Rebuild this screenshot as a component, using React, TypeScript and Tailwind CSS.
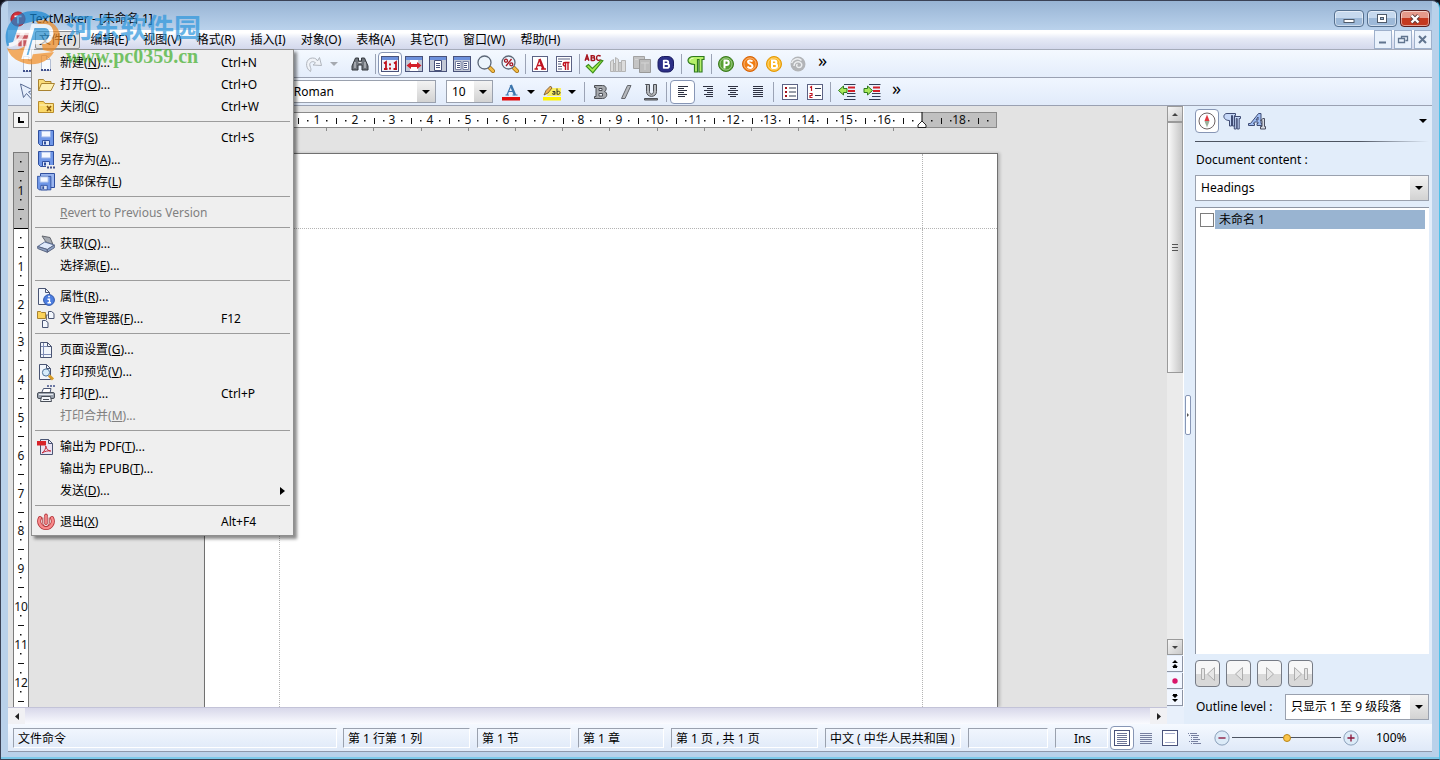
import React, { useLayoutEffect, useRef, useState } from 'react';
import clsx from 'clsx';

type IconProps = { children: React.ReactNode; size?: number };

const Svg = ({ children, size = 18 }: IconProps) => (
  <svg width={size} height={size} viewBox="0 0 18 18" fill="none" className="shrink-0" aria-hidden="true">
    {children}
  </svg>
);

const NAVY = '#4a5573';

const Caret = ({ color = '#000' }: { color?: string }) => (
  <svg width="8" height="4" viewBox="0 0 8 4" className="shrink-0" aria-hidden="true">
    <path d="M0 0h8L4 4z" fill={color} />
  </svg>
);

/* ---------- menu icons ---------- */

const NewIcon = () => (
  <Svg>
    <path d="M4.500 1.500h5l4 4v11h-9z" fill="#f7faff" stroke="#b4bfd4" />
    <path d="M9.500 1.500v4h4" stroke="#b4bfd4" />
    <path d="M4 16h2M7 16h2M10 16h2M13 16h1" stroke="#41518c" strokeWidth="2" />
  </Svg>
);

const OpenIcon = () => (
  <Svg>
    <path d="M1.500 14.500v-11h5l1.500 2h6v3" fill="#f9dc7a" stroke="#a98330" />
    <path d="M1.500 14.500l3-7h13l-3.500 7z" fill="#fdf0b4" stroke="#a98330" />
  </Svg>
);

const CloseDocIcon = () => (
  <Svg>
    <path d="M1.500 14.500v-11h5l1.500 2h8.500v9z" fill="#fbd968" stroke="#b98c2b" />
    <path d="M2.500 7h13" stroke="#fff3bf" />
    <path d="M10 8l4 5M14 8l-4 5" stroke="#8a5a10" strokeWidth="1.500" />
  </Svg>
);

const Floppy = () => (
  <>
    <path d="M1.500 1.500h15v15h-13l-2-2z" fill="#6f97e8" stroke="#2f4f9e" />
    <path d="M4.500 2h9v6h-9z" fill="#f4f8ff" stroke="#9cb5e8" />
    <path d="M5.500 11.500h7v5h-7z" fill="#dfe8fa" stroke="#2f4f9e" />
    <path d="M7 12.500h2v3H7z" fill="#2f4f9e" />
  </>
);

const SaveIcon = () => (
  <Svg>
    <Floppy />
  </Svg>
);

const SaveAsIcon = () => (
  <Svg>
    <g transform="translate(0 -1)">
      <Floppy />
    </g>
    <path d="M9 14h9v4H9z" fill="#efefef" />
    <path d="M10 16.500h2M13 16.500h2M16 16.500h2" stroke="#41518c" strokeWidth="2" />
  </Svg>
);

const SaveAllIcon = () => (
  <Svg>
    <path d="M3.500 .5h14v14h-14z" fill="#9ab6f0" stroke="#2f4f9e" />
    <g transform="translate(-1 2) scale(.9)">
      <Floppy />
    </g>
  </Svg>
);

const ScannerIcon = () => (
  <Svg>
    <path d="M5 1l8 1.500 3 7-7-2.500z" fill="#a5aab2" stroke="#63676f" />
    <path d="M.7 11.500l7-4.500 9.600 3-7 4.500z" fill="#dfe9fb" stroke="#5a6d95" />
    <path d="M.7 11.500v2l9.600 3.800v-2.800zM10.300 14.500v2.800l7-4.500v-2.800z" fill="#8fa3c6" stroke="#5a6580" />
  </Svg>
);

const PropsIcon = () => (
  <Svg>
    <path d="M1.500 .5h7l4 4v12h-11z" fill="#f2f6fc" stroke={NAVY} />
    <path d="M8.500 .5v4h4" stroke={NAVY} />
    <circle cx="12" cy="12" r="5.400" fill="#4c7ee0" stroke="#2f57ad" />
    <path d="M11.200 8.500h1.600M10.500 11.200h2v3.500M10.500 14.800h3.500" stroke="#fff" strokeWidth="1.400" />
  </Svg>
);

const FilesIcon = () => (
  <Svg>
    <path d="M.5 8.500v-7h3l1 1h4v6z" fill="#fbd35a" stroke="#a98330" />
    <path d="M11.500 1.500h3l2.500 2v5h-5.500zM5.500 10.500h3l2.500 2v5H5.500z" fill="#f2f6fc" stroke={NAVY} />
    <path d="M9 5h2M9.500 5v5" stroke="#777" />
  </Svg>
);

const PageSetupIcon = () => (
  <Svg>
    <path d="M3.500 1.500h7l4 4v11h-11z" fill="#f2f6fc" stroke={NAVY} />
    <path d="M10.500 1.500v4h4" stroke={NAVY} />
    <path d="M6.500 2v14M4 5.500h6M4 13.500h10" stroke="#7f8db5" />
  </Svg>
);

const PreviewIcon = () => (
  <Svg>
    <path d="M2.500 1.500h7l4 4v11h-11z" fill="#f2f6fc" stroke={NAVY} />
    <path d="M9.500 1.500v4h4" stroke={NAVY} />
    <circle cx="9" cy="9.500" r="3.600" fill="#d6ecfb" stroke="#4d7196" />
    <path d="M12 12.500l4 4" stroke="#d79a25" strokeWidth="3" />
  </Svg>
);

const PrinterIcon = () => (
  <Svg>
    <path d="M10 1h2M13 1h2M16 1h2" stroke="#41518c" strokeWidth="1.500" />
    <path d="M4.500 8l2-4.500h7.500L13 8z" fill="#fff" stroke={NAVY} />
    <rect x=".5" y="7.500" width="17" height="6" rx="1.500" fill="#9aa2ae" stroke="#494f59" />
    <path d="M2 9.500h14" stroke="#e8ebf0" />
    <path d="M4.500 11.500h9l1 5h-11z" fill="#f4f7fb" stroke="#494f59" />
    <path d="M6 14.500h6" stroke="#494f59" />
  </Svg>
);

const PdfIcon = () => (
  <Svg>
    <path d="M3.500 1.500h8l4 4v11h-12z" fill="#e9e3f3" stroke={NAVY} />
    <path d="M11.500 1.500v4h4" stroke={NAVY} />
    <path d="M0 3h9v4.500H0z" fill="#d8232a" />
    <path d="M5 15c2.500-1.500 4-5 3.800-7 .4 3 2.500 5 5 5-3-.5-6 .3-8.800 2z" stroke="#c4283a" />
  </Svg>
);

const ExitIcon = () => (
  <Svg>
    <path d="M3 5a6.800 6.800 0 1 0 12 0" stroke="#b3343a" strokeWidth="4" strokeLinecap="round" />
    <path d="M3 5a6.800 6.800 0 1 0 12 0" stroke="#f98a8b" strokeWidth="2.400" strokeLinecap="round" />
    <path d="M5.800 4.500v6a3.200 3.200 0 0 0 6.400 0v-6" stroke="#b3343a" />
    <path d="M9 2.300v8" stroke="#b3343a" strokeWidth="3.400" strokeLinecap="round" />
    <path d="M9 2.300v8" stroke="#f98a8b" strokeWidth="1.800" strokeLinecap="round" />
  </Svg>
);

/* ---------- toolbar icons ---------- */

const RedoIcon = () => (
  <Svg>
    <path
      d="M5.500 16.500C-.5 13 .5 3 7.500 3c3 0 4.500 1.500 5 3l2-3.500 2 8-8.500-.5 2.500-2C9 5.500 3.500 6.500 5 11c.5 2 1.500 3 .5 5.500z"
      fill="#f0f3f8"
      stroke="#b0b5bd"
    />
  </Svg>
);

const BinocularsIcon = () => (
  <Svg>
    <path d="M4.500 3h3v3h3V3h3l3.500 8v4h-6v-5h-4v5H1v-4z" fill="#70757c" stroke="#34383d" />
    <path d="M4 7v6M14 7v6" stroke="#d5d8dc" />
    <path d="M7.500 7.500h3" stroke="#ddd" />
  </Svg>
);

const WinFrame = ({ children }: { children?: React.ReactNode }) => (
  <Svg>
    <rect x=".5" y="1.500" width="17" height="15" fill="#eef3fb" stroke="#49527a" />
    <path d="M1 3.500h16" stroke="#6c90dc" strokeWidth="3" />
    {children}
  </Svg>
);

const Zoom100Icon = () => (
  <WinFrame>
    <path d="M3 8.500l2-1.500v7.500M13 8.500l2-1.500v7.500M3 14h3.500M12.500 14H16" stroke="#c1121f" strokeWidth="1.800" />
    <path d="M8 8.500h2v2H8zM8 12.500h2v2H8z" fill="#c1121f" />
  </WinFrame>
);

const FitWidthIcon = () => (
  <WinFrame>
    <path d="M1 5h16v11H1z" fill="#c3c9d6" />
    <path d="M5 5h8v11H5z" fill="#fff" />
    <path d="M1.500 10.500l4.500-3.500v2h6V7l4.500 3.500L12 14v-2H6v2z" fill="#d3202a" />
  </WinFrame>
);

const FitPageIcon = () => (
  <WinFrame>
    <path d="M1 5h16v11H1z" fill="#c3c9d6" />
    <path d="M5.500 5.500h7v10h-7z" fill="#fff" stroke="#49527a" />
    <path d="M7 8.500h4M7 10.500h4M7 12.500h4" stroke="#49527a" />
  </WinFrame>
);

const TwoPagesIcon = () => (
  <WinFrame>
    <path d="M1 5h16v11H1z" fill="#c3c9d6" />
    <path d="M2.500 6.500H8v8H2.500zM10 6.500h5.500v8H10z" fill="#fff" stroke="#7a83a5" />
    <path d="M4 8.500h3M4 10.500h3M4 12.500h3M11 8.500h3M11 10.500h3M11 12.500h3" stroke="#49527a" />
  </WinFrame>
);

const MagnifierIcon = ({ percent = false }: { percent?: boolean }) => (
  <Svg>
    <path d="M12.500 12.500l3.500 3.500" stroke="#9c6a12" strokeWidth="4" strokeLinecap="round" />
    <path d="M12.500 12.500l3.500 3.500" stroke="#f2bb45" strokeWidth="2.500" strokeLinecap="round" />
    <circle cx="7.500" cy="7.500" r="6.500" fill="#ecf5fd" stroke="#5d6878" strokeWidth="1.300" />
    {percent && (
      <>
        <path d="M10.500 4l-5.500 7" stroke="#a5121c" strokeWidth="1.300" />
        <circle cx="5" cy="5.700" r="1.500" stroke="#a5121c" strokeWidth="1.300" />
        <circle cx="10.300" cy="9.300" r="1.500" stroke="#a5121c" strokeWidth="1.300" />
      </>
    )}
  </Svg>
);

const CharFormatIcon = () => (
  <Svg>
    <rect x="1.500" y="1.500" width="15" height="15" fill="#fff" stroke="#5b6284" />
    <path d="M5 14L8.500 4.500" stroke="#c1121f" strokeWidth="1.200" />
    <path d="M8.500 4l4 10" stroke="#c1121f" strokeWidth="2.400" />
    <path d="M6.500 10.500h5M3.500 14H7M10 14h5" stroke="#c1121f" strokeWidth="1.300" />
  </Svg>
);

const ParaFormatIcon = () => (
  <Svg>
    <rect x="1.500" y="1.500" width="15" height="15" fill="#fff" stroke="#5b6284" />
    <path d="M3 4h12M3 6.500h4M3 9h3M3 11.500h4M3 14h4" stroke="#5b6284" />
    <path d="M14.500 7.500H10a1.700 1.700 0 0 0 0 3.500M10.500 7v8M13 7v8" stroke="#c1121f" strokeWidth="1.400" />
  </Svg>
);

const SpellIcon = () => (
  <Svg size={20}>
    <path
      d="M1 6l1.700-5L4.400 6M1.700 4.500h2M6.500 1v5M6.500 1.500h1.800c1.500 0 1.500 2 0 2H6.500h2c1.600 0 1.600 2.300 0 2.300h-2M15 2c-2.500-1.600-3.700 0-3.700 1.500S13 6.700 15 5"
      stroke="#a5121c"
      strokeWidth="1.300"
    />
    <path d="M2 11l2-1.500 3.500 3.500L15.500 5.500l1.500.5L8 17z" fill="#a4ec4b" stroke="#3c8f1c" />
  </Svg>
);

const BooksIcon = () => (
  <Svg>
    <path d="M1.500 6.500l3-2v12h-3zM6.500 2.500l3 2v12h-3zM12.500 5.500h4v11h-4z" fill="#dcdcdc" stroke="#b4b4b4" />
    <path d="M4.500 8.500h2v8h-2zM9.500 7.500h3v9h-3z" fill="#c9c9c9" stroke="#b4b4b4" />
  </Svg>
);

const StackIcon = () => (
  <Svg>
    <path d="M.5 1.500h11v12H.5z" fill="#c4c4c4" stroke="#a2a2a2" />
    <path d="M6.500 4.500h11v13h-11z" fill="#bdbdbd" stroke="#999" />
    <path d="M2 4.500h3M8 8h8M12 8v7" stroke="#d4d4d4" />
  </Svg>
);

const BerlitzIcon = () => (
  <Svg>
    <rect x="1" y="1.500" width="15.500" height="15.500" rx="5.500" fill="#2c2f86" stroke="#1b1d60" />
    <path d="M6.800 5v8.500M6.500 5.700h3c2.400 0 2.400 3.300 0 3.300h-2.500 3c2.800 0 2.800 3.800 0 3.800H6.500" stroke="#fff" strokeWidth="1.800" />
  </Svg>
);

const PilcrowIcon = () => (
  <Svg>
    <path
      d="M17 1.500v3h-2V17h-3V4.500h-1.500V17h-3v-7.500C3 9.500 1 7.500 1 5.500s2-4 5.500-4z"
      fill="#b6f06a"
      stroke="#2f7a1f"
      strokeWidth="1.200"
    />
    <path d="M3 5.500c0-1.500 1.500-2.200 3.500-2.200" stroke="#eaffce" />
  </Svg>
);

const Ball = ({ fill, edge, d }: { fill: string; edge: string; d: string }) => (
  <Svg>
    <circle cx="9" cy="9" r="7.500" fill={fill} stroke={edge} />
    <circle cx="9" cy="9" r="6" stroke="#fff" strokeOpacity=".4" />
    <path d={d} stroke="#fff" strokeWidth="2" />
  </Svg>
);

const GlobeIcon = () => (
  <Svg>
    <circle cx="9" cy="9" r="7.500" fill="#b2b4b7" />
    <path d="M2.500 8c1.500-4 7-6 10-2.500M5 11c0-3.500 3.500-5.500 6.500-3.500 2.500 2 1 5-1.500 5s-3-2.500-1.500-3.500" stroke="#eceef0" strokeWidth="1.500" />
  </Svg>
);

const FontColorIcon = () => (
  <Svg>
    <path d="M0 14h18v3.500H0z" fill="#e30b0b" />
    <path d="M5 12L9 2.500" stroke="#3d76ad" strokeWidth="1.200" />
    <path d="M8.800 2L13 12" stroke="#3d76ad" strokeWidth="2.400" />
    <path d="M6.500 8.500h5M3.500 12H7M10.500 12h5" stroke="#3d76ad" strokeWidth="1.200" />
  </Svg>
);

const HighlightIcon = () => (
  <Svg>
    <path d="M0 14h18v3.500H0z" fill="#fff200" />
    <path d="M6 5h12v8H4z" fill="#fbee62" />
    <path d="M1 12l2-4.500L7.500 3 9 5 5 10z" fill="#f0b354" stroke="#6b5328" strokeWidth=".8" />
    <path d="M12 11.500V8.500H9.500M12 10c-3-.5-3 1.500-1.500 1.500L12 11M14 5.500v6M14 9c2-1.500 3-.5 3 .8s-1.500 2-3 1.200" stroke="#3c3c2c" />
  </Svg>
);

const BoldIcon = () => (
  <Svg>
    <path d="M2.500 2.500h8c4.500 0 4.500 5 2 6 3.500 1 3 7-2 7h-8v-2h1.500v-9H2.500z" fill="#a6a9ad" stroke="#4b4e54" />
    <path d="M7 5.500h3v2H7zM7 10.500h3.500v2.500H7z" fill="#f4f8ff" stroke="#4b4e54" />
  </Svg>
);

const ItalicIcon = () => (
  <Svg>
    <path d="M10.500 2.500h3.500L8 15.500H4.500z" fill="#b6b9bd" stroke="#63666c" />
  </Svg>
);

const UnderlineIcon = () => (
  <Svg>
    <path d="M3.500 1.500h4v7c0 3.500 4 3.500 4 0v-7h3v7c0 6.500-10 6.500-10 0v-6z" fill="#b6b9bd" stroke="#4b4e54" />
    <path d="M2.500 15.500h13V17h-13z" fill="#8f9298" stroke="#4b4e54" />
  </Svg>
);

const AlignIcon = ({ d }: { d: string }) => (
  <Svg>
    <path d={d} stroke="#2e3242" />
  </Svg>
);

const ALIGN_LEFT = 'M4 3.500h10M4 5.500h6M4 7.500h9M4 9.500h6M4 11.500h9M4 13.500h7';
const ALIGN_RIGHT = 'M4 3.500h10M8 5.500h6M5 7.500h9M8 9.500h6M5 11.500h9M7 13.500h7';
const ALIGN_CENTER = 'M4 3.500h10M6 5.500h6M4 7.500h10M6 9.500h6M4 11.500h10M6 13.500h6';
const ALIGN_FULL = 'M4 3.500h10M4 5.500h10M4 7.500h10M4 9.500h10M4 11.500h10M4 13.500h10';

const BulletsIcon = () => (
  <Svg>
    <rect x="1.500" y="1.500" width="15" height="15" fill="#fff" stroke="#5b6284" />
    <path d="M4 4h2v2H4zM4 8h2v2H4zM4 12h2v2H4z" fill="#a5121c" />
    <path d="M8 5h7M8 9h7M8 13h7" stroke="#333c55" />
  </Svg>
);

const NumberingIcon = () => (
  <Svg>
    <rect x="1.500" y="1.500" width="15" height="15" fill="#fff" stroke="#5b6284" />
    <path d="M4 4.500l1.500-1V8M3.500 10.500h2.500v2H4v2h2.500" stroke="#c1121f" strokeWidth="1.200" />
    <path d="M9 5.500h6M9 12.500h6" stroke="#333c55" />
  </Svg>
);

const IndentIcon = ({ out = false }: { out?: boolean }) => (
  <Svg>
    <path d="M6 1.500h11.500M6 16.500h11.500M9 13.500h8.500M9 10.500h8.500" stroke="#333c55" />
    <path d="M10 4.500h7M10 8h7" stroke="#d3202a" strokeWidth="2.200" />
    <path
      d={out ? 'M.5 7.500L5.500 3v2.500H9v4H5.500V12z' : 'M9.500 7.500L4.500 3v2.500H1v4h3.500V12z'}
      fill="#a8e85a"
      stroke="#2f7a1f"
    />
  </Svg>
);

const CursorIcon = () => (
  <Svg>
    <path d="M1.500 1l3 13.500 3-4 4.500 5 2-2-4.500-4.500 4.500-2z" fill="#e6effc" stroke="#5a6d95" />
  </Svg>
);

/* ---------- small building blocks ---------- */

interface ToolButtonProps {
  label: string;
  active?: boolean;
  wide?: boolean;
  disabled?: boolean;
  children: React.ReactNode;
}

const ToolButton: React.FC<ToolButtonProps> = ({ label, active, wide, disabled, children }) => (
  <button
    aria-label={label}
    disabled={disabled}
    className={clsx(
      'flex h-6 shrink-0 items-center justify-center rounded-sm border',
      wide ? 'w-[25px]' : 'w-6',
      active ? 'border-[#8796b5] bg-white' : 'border-transparent',
    )}
  >
    {children}
  </button>
);

const CaretButton = ({ label, color }: { label: string; color?: string }) => (
  <button aria-label={label} className="flex h-6 w-4 shrink-0 items-center justify-center">
    <Caret color={color} />
  </button>
);

const Divider = ({ className = 'w-1.5' }: { className?: string }) => (
  <span className={clsx('flex h-5 shrink-0 justify-center', className)}>
    <span className="w-px bg-[#9ba3b5]" />
  </span>
);

interface DropDownProps {
  label?: string;
  id?: string;
  value: string;
  className: string;
}

const DropDown: React.FC<DropDownProps> = ({ label, id, value, className }) => (
  <div className={clsx('relative shrink-0 border border-[#9aa1ae] bg-white', className)}>
    <select id={id} aria-label={label} className="h-full w-full appearance-none bg-transparent pl-[5px] pr-4 outline-none">
      <option>{value}</option>
    </select>
    <span className="pointer-events-none absolute inset-y-0 right-0 flex w-[18px] items-center justify-center bg-linear-to-b from-[#f3f3f3] to-[#d2d2d2]">
      <Caret />
    </span>
  </div>
);

/* ---------- menu ---------- */

interface MenuEntry {
  label: string;
  mnemonic: string;
  tail?: string;
  shortcut?: string;
  icon?: React.ReactNode;
  disabled?: boolean;
  submenu?: boolean;
}

const fileMenu: MenuEntry[][] = [
  [
    { label: '新建', mnemonic: 'N', tail: '...', shortcut: 'Ctrl+N', icon: <NewIcon /> },
    { label: '打开', mnemonic: 'O', tail: '...', shortcut: 'Ctrl+O', icon: <OpenIcon /> },
    { label: '关闭', mnemonic: 'C', shortcut: 'Ctrl+W', icon: <CloseDocIcon /> },
  ],
  [
    { label: '保存', mnemonic: 'S', shortcut: 'Ctrl+S', icon: <SaveIcon /> },
    { label: '另存为', mnemonic: 'A', tail: '...', icon: <SaveAsIcon /> },
    { label: '全部保存', mnemonic: 'L', icon: <SaveAllIcon /> },
  ],
  [{ label: 'Revert to Previous Version', mnemonic: '', disabled: true }],
  [
    { label: '获取', mnemonic: 'Q', tail: '...', icon: <ScannerIcon /> },
    { label: '选择源', mnemonic: 'E', tail: '...' },
  ],
  [
    { label: '属性', mnemonic: 'R', tail: '...', icon: <PropsIcon /> },
    { label: '文件管理器', mnemonic: 'F', tail: '...', shortcut: 'F12', icon: <FilesIcon /> },
  ],
  [
    { label: '页面设置', mnemonic: 'G', tail: '...', icon: <PageSetupIcon /> },
    { label: '打印预览', mnemonic: 'V', tail: '...', icon: <PreviewIcon /> },
    { label: '打印', mnemonic: 'P', tail: '...', shortcut: 'Ctrl+P', icon: <PrinterIcon /> },
    { label: '打印合并', mnemonic: 'M', tail: '...', disabled: true },
  ],
  [
    { label: '输出为 PDF', mnemonic: 'T', tail: '...', icon: <PdfIcon /> },
    { label: '输出为 EPUB', mnemonic: 'T', tail: '...' },
    { label: '发送', mnemonic: 'D', tail: '...', submenu: true },
  ],
  [{ label: '退出', mnemonic: 'X', shortcut: 'Alt+F4', icon: <ExitIcon /> }],
];

const Mnemonic = ({ entry }: { entry: MenuEntry }) => {
  if (!entry.mnemonic) {
    return (
      <span>
        <u>{entry.label[0]}</u>
        {entry.label.slice(1)}
      </span>
    );
  }
  return (
    <span>
      {entry.label}(<u>{entry.mnemonic}</u>){entry.tail}
    </span>
  );
};

const FileMenu = () => (
  <div
    role="menu"
    className="absolute top-full -left-1 z-20 w-[263px] border border-[#8f8f8f] bg-[#efefef] py-0.5 shadow-[3px_3px_3px_rgba(0,0,0,0.45)]"
  >
    {fileMenu.map((group, i) => (
      <React.Fragment key={i}>
        {i > 0 && <div className="mx-[3px] mt-[3px] mb-[5px] h-px bg-[#9c9c9c]" />}
        {group.map((entry) => (
          <button
            key={entry.label}
            role="menuitem"
            disabled={entry.disabled}
            className={clsx('flex h-[22px] w-full items-center pl-[5px] text-left', entry.disabled && 'text-[#808080]')}
          >
            <span className="w-[23px] shrink-0">{entry.icon}</span>
            <span className="w-[161px] shrink-0 whitespace-nowrap">
              <Mnemonic entry={entry} />
            </span>
            <span className="flex-1">{entry.shortcut}</span>
            {entry.submenu && (
              <svg width="5" height="8" viewBox="0 0 5 8" className="mr-2" aria-hidden="true">
                <path d="M0 0v8l5-4z" fill="#000" />
              </svg>
            )}
          </button>
        ))}
      </React.Fragment>
    ))}
  </div>
);

const menus = ['编辑(E)', '视图(V)', '格式(R)', '插入(I)', '对象(O)', '表格(A)', '其它(T)', '窗口(W)', '帮助(H)'];

const TitleBar = () => (
  <header className="flex h-[29px] shrink-0 items-end justify-between bg-linear-to-b from-[#98b4d4] to-[#bad2ec] pr-[2px] pb-[3px] pl-[2px]">
    <div className="flex h-4 items-center gap-1">
      <Svg size={16}>
        <circle cx="9" cy="9" r="8" fill="#d3303a" stroke="#a31c28" />
        <path d="M5 6h8M9 6v8" stroke="#fff" strokeWidth="2" />
      </Svg>
      <h1>TextMaker - [未命名 1]</h1>
    </div>
    <div className="flex gap-[3px]">
      {['Minimize', 'Maximize', 'Close'].map((name) => (
        <button
          key={name}
          aria-label={name}
          className={clsx(
            'flex h-[17px] w-[30px] items-center justify-center rounded-sm border shadow-[inset_0_0_0_1px_rgba(255,255,255,0.5)]',
            name === 'Close'
              ? 'border-[#5a1d1d] bg-linear-to-b from-[#e59a8b] from-45% to-[#c4391f] to-50%'
              : 'border-[#55708f] bg-linear-to-b from-[#c6d9ee] from-45% to-[#9db9d8] to-50%',
          )}
        >
          <svg width="12" height="10" viewBox="0 0 12 10" fill="none" aria-hidden="true">
            {name === 'Minimize' && <rect x="1" y="5.500" width="10" height="3" fill="#fff" stroke="#4e5a69" />}
            {name === 'Maximize' && (
              <>
                <rect x="1.500" y=".5" width="9" height="8" fill="#fff" stroke="#4e5a69" />
                <rect x="4.500" y="3.500" width="3" height="2" fill="#9db9d8" stroke="#4e5a69" />
              </>
            )}
            {name === 'Close' && (
              <>
                <path d="M2.500 1.500l7 7M9.500 1.500l-7 7" stroke="#5b3a3a" strokeWidth="4" />
                <path d="M2.500 1.500l7 7M9.500 1.500l-7 7" stroke="#fff" strokeWidth="2.400" />
              </>
            )}
          </svg>
        </button>
      ))}
    </div>
  </header>
);

const MenuBar = () => (
  <nav className="flex h-5 shrink-0 items-stretch border-b border-[#a5abba] bg-linear-to-b from-white from-15% via-[#e6eaf6] via-45% to-[#d3d8ec] pl-[7px]">
    <div className="flex w-5 items-center">
      <Svg size={15}>
        <rect x="1" y="1" width="16" height="16" fill="#f3dede" />
        <path d="M2 4h14v4H2zM4 10h4v7H4zM10 10h4v7h-4z" fill="#c65960" />
      </Svg>
    </div>
    <div className="relative">
      <button className="mt-px h-[18px] rounded-xs border border-[#8d8d8d] bg-[#e2e2e2] px-[3px]">文件(F)</button>
      <FileMenu />
    </div>
    <ul className="flex flex-1 items-center gap-px pt-px pl-[3px]">
      {menus.map((m) => (
        <li key={m}>
          <button className="px-[7px] whitespace-nowrap">{m}</button>
        </li>
      ))}
    </ul>
    <div className="flex gap-0.5">
      {['M3 9.500h7', 'M5.500 5.500v-2h6v4h-2M2.500 5.500h6v4h-6z', 'M3 3l7 7M10 3l-7 7'].map((d, i) => (
        <button
          key={d}
          aria-label={['Minimize document', 'Restore document', 'Close document'][i]}
          className="flex w-[18px] items-center justify-center border border-[#9eb0cb] bg-[#eaf2fc]"
        >
          <svg width="14" height="14" viewBox="0 0 14 14" fill="none" aria-hidden="true">
            <path d={d} stroke="#61758f" strokeWidth={i === 1 ? 1.3 : 2} />
          </svg>
        </button>
      ))}
    </div>
  </nav>
);

const MainToolbar = () => (
  <div className="flex h-7 shrink-0 items-center border-b border-[#9aa1b2] bg-linear-to-b from-[#f4f9ff] to-[#e4edfb] pl-2">
    <div className="w-[286px] shrink-0">
      <ToolButton label="New">
        <NewIcon />
      </ToolButton>
    </div>
    <ToolButton label="Redo" disabled>
      <RedoIcon />
    </ToolButton>
    <CaretButton label="Redo list" color="#a5a9b0" />
    <span className="w-1.5 shrink-0" />
    <ToolButton label="Find">
      <BinocularsIcon />
    </ToolButton>
    <Divider />
    <ToolButton label="Actual size" active>
      <Zoom100Icon />
    </ToolButton>
    <ToolButton label="Fit margins">
      <FitWidthIcon />
    </ToolButton>
    <ToolButton label="Full page">
      <FitPageIcon />
    </ToolButton>
    <ToolButton label="Two pages">
      <TwoPagesIcon />
    </ToolButton>
    <ToolButton label="Zoom in">
      <MagnifierIcon />
    </ToolButton>
    <ToolButton label="Zoom level">
      <MagnifierIcon percent />
    </ToolButton>
    <Divider />
    <ToolButton label="Character">
      <CharFormatIcon />
    </ToolButton>
    <ToolButton label="Paragraph">
      <ParaFormatIcon />
    </ToolButton>
    <Divider />
    <ToolButton label="Spelling">
      <SpellIcon />
    </ToolButton>
    <ToolButton label="Thesaurus" disabled>
      <BooksIcon />
    </ToolButton>
    <ToolButton label="Translate" disabled>
      <StackIcon />
    </ToolButton>
    <ToolButton label="Dictionary">
      <BerlitzIcon />
    </ToolButton>
    <Divider />
    <ToolButton label="Formatting marks">
      <PilcrowIcon />
    </ToolButton>
    <Divider />
    <ToolButton label="PlanMaker">
      <Ball fill="#58a032" edge="#3c7a1e" d="M7.500 13.500V5.500h2c3 0 3 4.500 0 4.500h-2" />
    </ToolButton>
    <ToolButton label="Presentations">
      <Ball fill="#f07d14" edge="#d5640a" d="M11.500 6.500c-1-1.500-4.500-1.500-4.500 .5s4.500 1.500 4.500 4-4 2.500-5 .5" />
    </ToolButton>
    <ToolButton label="BasicMaker">
      <Ball fill="#fbb41c" edge="#e39a0a" d="M7 13V5.500h2.500c2.500 0 2.500 3.500 0 3.500H7h3c2.700 0 2.700 4 0 4H6.500" />
    </ToolButton>
    <ToolButton label="Thunderbird" disabled>
      <GlobeIcon />
    </ToolButton>
    <button aria-label="More tools" className="ml-2 pb-2 text-lg leading-4">
      »
    </button>
  </div>
);

const FormatToolbar = () => (
  <div className="flex h-7 shrink-0 items-center border-b border-[#9aa1b2] bg-linear-to-b from-[#f0f6ff] to-[#e1ebfa] pl-2">
    <div className="w-[207px] shrink-0">
      <ToolButton label="Object mode">
        <CursorIcon />
      </ToolButton>
    </div>
    <DropDown label="Font" value="Times New Roman" className="h-[23px] w-[213px]" />
    <span className="w-2.5 shrink-0" />
    <DropDown label="Font size" value="10" className="h-[23px] w-[47px]" />
    <span className="w-[5px] shrink-0" />
    <ToolButton label="Font color" wide>
      <FontColorIcon />
    </ToolButton>
    <CaretButton label="Font color list" />
    <ToolButton label="Highlight" wide>
      <HighlightIcon />
    </ToolButton>
    <CaretButton label="Highlight list" />
    <Divider className="w-2" />
    <ToolButton label="Bold" wide>
      <BoldIcon />
    </ToolButton>
    <ToolButton label="Italic" wide>
      <ItalicIcon />
    </ToolButton>
    <ToolButton label="Underline" wide>
      <UnderlineIcon />
    </ToolButton>
    <Divider className="w-[7px]" />
    <ToolButton label="Align left" wide active>
      <AlignIcon d={ALIGN_LEFT} />
    </ToolButton>
    <ToolButton label="Align right" wide>
      <AlignIcon d={ALIGN_RIGHT} />
    </ToolButton>
    <ToolButton label="Center" wide>
      <AlignIcon d={ALIGN_CENTER} />
    </ToolButton>
    <ToolButton label="Justify" wide>
      <AlignIcon d={ALIGN_FULL} />
    </ToolButton>
    <Divider className="w-[7px]" />
    <ToolButton label="Bullets" wide>
      <BulletsIcon />
    </ToolButton>
    <ToolButton label="Numbering" wide>
      <NumberingIcon />
    </ToolButton>
    <Divider className="w-[7px]" />
    <ToolButton label="Decrease indent" wide>
      <IndentIcon out />
    </ToolButton>
    <ToolButton label="Increase indent" wide>
      <IndentIcon />
    </ToolButton>
    <button aria-label="More formatting" className="ml-2 pb-2 text-lg leading-4">
      »
    </button>
  </div>
);

/* ---------- rulers ---------- */

const CM = 37.8;
const MARGIN = 75;
const PAGE = 793;

const HorizontalRuler = () => {
  const marks = Array.from({ length: 21 }, (_, i) => i - 2);
  const end = PAGE - MARGIN;
  return (
    <svg width={PAGE} height="21" viewBox={`0 0 ${PAGE} 21`} className="block shrink-0" fontSize="12" aria-hidden="true">
      <rect x=".5" y=".5" width={PAGE - 1} height="15" fill="#fff" stroke="#8a8a8a" />
      <rect x="1" y="1" width={MARGIN - 1} height="14" fill="#c0c0c0" />
      <rect x={end} y="1" width={MARGIN - 1} height="14" fill="#c0c0c0" />
      {marks.map((n) => {
        const x = Math.round(MARGIN + n * CM);
        return (
          <g key={n} fill="#111">
            {n !== 0 && n !== 17 && n < 19 && n > -2 && (
              <text x={x} y="12" textAnchor="middle">
                {Math.abs(n)}
              </text>
            )}
            <rect x={x + 9} y="8" width="1.500" height="1.500" />
            <rect x={x + 19} y="6" width="1" height="6" />
            <rect x={x + 28} y="8" width="1.500" height="1.500" />
          </g>
        );
      })}
      {Array.from({ length: 13 }, (_, i) => (
        <rect key={i} x={Math.round(MARGIN + (i + 1) * 47.2)} y="16" width="1" height="3" fill="#8a8a8a" />
      ))}
      <path d={`M${end} 0v10`} stroke="#000" />
      <path d={`M${end - 4} 15.500v-2.500l4-4 4 4v2.500z`} fill="#fff" stroke="#222" />
    </svg>
  );
};

const VerticalRuler = () => {
  const box = useRef<HTMLDivElement>(null);
  const [height, setHeight] = useState(0);

  useLayoutEffect(() => {
    const measure = () => setHeight(box.current?.clientHeight ?? 0);
    measure();
    window.addEventListener('resize', measure);
    return () => window.removeEventListener('resize', measure);
  }, []);

  // only the centimetres whose label fits the visible part
  const count = Math.max(0, Math.floor((height - 84) / CM) + 3);
  const marks = Array.from({ length: count }, (_, i) => i - 2);

  return (
    <div ref={box} className="w-4 shrink-0 overflow-hidden border-x border-t border-[#7b7b7b] bg-white">
      <svg width="14" height={height} className="block" fontSize="12" aria-hidden="true">
        <rect width="14" height="75" fill="#c0c0c0" />
        <path d="M0 75.500h14" stroke="#000" />
        {marks.map((n) => {
          const y = Math.round(75 + n * CM);
          return (
            <g key={n} fill="#111">
              {n !== 0 && n > -2 && (
                <text x="7" y={y + 5} textAnchor="middle">
                  {Math.abs(n)}
                </text>
              )}
              <rect x="6" y={y + 9} width="1.500" height="1.500" />
              <rect x="4" y={y + 19} width="6" height="1" />
              <rect x="6" y={y + 28} width="1.500" height="1.500" />
            </g>
          );
        })}
      </svg>
    </div>
  );
};

/* ---------- workspace ---------- */

const Page = () => (
  <div className="flex w-[794px] shrink-0 flex-col border border-b-0 border-[#707070] bg-white shadow-[2px_0_3px_rgba(0,0,0,0.2)]">
    <div className="flex h-[75px] shrink-0 border-b border-dotted border-[#b4b4b4]">
      <div className="mr-[74px] ml-[74px] flex-1 border-r border-dotted border-[#b4b4b4]" />
    </div>
    <div className="mx-[74px] flex-1 border-x border-dotted border-[#b4b4b4]" />
  </div>
);

const ScrollArrow = ({ up = false }: { up?: boolean }) => (
  <button
    aria-label={up ? 'Scroll up' : 'Scroll down'}
    className="flex h-4 w-4 shrink-0 items-center justify-center border border-[#9a9a9a] bg-linear-to-br from-[#f6f6f6] to-[#c9c9c9]"
  >
    <svg width="6" height="3" viewBox="0 0 6 3" aria-hidden="true">
      <path d={up ? 'M0 3h6L3 0z' : 'M0 0h6L3 3z'} fill="#444" />
    </svg>
  </button>
);

const VerticalScroll = () => (
  <div className="flex w-[17px] shrink-0 flex-col border-r border-white bg-[#e8e8e8]">
    <ScrollArrow up />
    <div className="min-h-0 flex-1 bg-[#ebebeb]">
      <div className="flex h-[251px] w-4 flex-col items-center justify-center gap-0.5 border border-[#9a9a9a] bg-linear-to-r from-[#fafafa] to-[#c6c6c6]">
        <span className="h-px w-1.5 bg-[#555]" />
        <span className="h-px w-1.5 bg-[#555]" />
        <span className="h-px w-1.5 bg-[#555]" />
      </div>
    </div>
    <ScrollArrow />
    <div className="flex flex-col gap-px bg-[#e3edfb] py-px">
      {['M1 4h6L4 1zM1 8h6L4 5zM2 8h4v1H2z', '', 'M2 1h4v1H2zM1 2h6L4 5zM1 6h6L4 9z'].map((d, i) => (
        <button
          key={i}
          aria-label={['Previous', 'Browse by', 'Next'][i]}
          className="flex h-4 w-4 items-center justify-center border-r border-b border-[#8c93a3] bg-[#f2f7ff]"
        >
          <svg width="8" height="10" viewBox="0 0 8 10" aria-hidden="true">
            {d ? <path d={d} fill="#000" /> : <circle cx="4" cy="5" r="2.700" fill="#d9156a" />}
          </svg>
        </button>
      ))}
    </div>
  </div>
);

const Workspace = () => (
  <main className="flex min-w-0 flex-1 flex-col bg-[#e8f0fb]">
    <div className="flex min-h-0 flex-1">
      <div className="flex min-w-0 flex-1 flex-col overflow-hidden bg-[#e3e3e3] pl-[5px]">
        <div className="flex h-[46px] shrink-0 pt-1.5">
          <button
            aria-label="Tab type"
            className="flex h-4 w-4 shrink-0 items-center justify-center border border-[#7b7b7b] bg-[#f4f4f4]"
          >
            <svg width="8" height="8" viewBox="0 0 8 8" fill="none" aria-hidden="true">
              <path d="M2 1v5h5" stroke="#000" strokeWidth="2" />
            </svg>
          </button>
          <div className="flex flex-1 justify-center pl-[5px]">
            <HorizontalRuler />
          </div>
        </div>
        <div className="flex min-h-0 flex-1">
          <VerticalRuler />
          <div className="flex flex-1 justify-center pt-px pl-1.5">
            <Page />
          </div>
        </div>
      </div>
      <VerticalScroll />
    </div>
    <div className="mr-[17px] flex h-[17px] shrink-0 justify-between border-t border-[#c3c3d8] bg-linear-to-b from-[#d8d8ea] to-[#fafbff]">
      {['M5 0v7L1 3.500z', 'M1 0v7l4-3.500z'].map((d, i) => (
        <button
          key={d}
          aria-label={i ? 'Scroll right' : 'Scroll left'}
          className="flex w-[17px] items-center justify-center bg-[#f1f1f4]"
        >
          <svg width="6" height="7" viewBox="0 0 6 7" aria-hidden="true">
            <path d={d} fill="#222" />
          </svg>
        </button>
      ))}
    </div>
  </main>
);

/* ---------- sidebar ---------- */

const navShapes = [
  { label: 'First', d: 'M2.500 3.500h3v11h-3zM15.500 2.500v13L8.500 9z' },
  { label: 'Previous heading', d: 'M12.500 2.500v13L5.500 9z' },
  { label: 'Next heading', d: 'M5.500 2.500v13l7-6.500z' },
  { label: 'Last', d: 'M12.500 3.500h3v11h-3zM2.500 2.500v13l7-6.500z' },
];

const Sidebar = () => (
  <aside className="flex w-[248px] shrink-0 bg-[#e2edfa]">
    <div className="flex w-[11px] shrink-0 items-center pl-px">
      <button
        aria-label="Collapse sidebar"
        className="flex h-10 w-1.5 items-center justify-center rounded-xs border border-[#8796b5] bg-white"
      >
        <svg width="2" height="4" viewBox="0 0 2 4" aria-hidden="true">
          <path d="M0 0v4l2-2z" fill="#555" />
        </svg>
      </button>
    </div>
    <div className="flex min-w-0 flex-1 flex-col pr-[3px] pt-[3px]">
      <div className="flex items-center">
        <ToolButton label="Navigation" active>
          <Svg>
            <circle cx="9" cy="9" r="8" stroke="#6e6262" />
            <path d="M9 2.500L11.500 9h-5z" fill="#e23a40" />
            <path d="M9 15.500L6.500 9h5z" fill="#9bb09b" />
          </Svg>
        </ToolButton>
        <ToolButton label="Paragraph styles" wide>
          <Svg>
            <path
              d="M12.500 1.500v2h-1V14h-2V3.500h-1V14h-2V8.500C-.5 8.500-.5 1.500 4 1.500zM17.500 4.500v2h-1.300V17h-2V6.500h-.9V17h-2V4.500z"
              fill="#c6d8f8"
              stroke="#3f4c74"
            />
          </Svg>
        </ToolButton>
        <ToolButton label="Character styles" wide>
          <Svg>
            <path
              d="M.5 13.500v-2h2L10.500 1.500H13v10h1v2H9v-2h1V10H6.500l-1 1.500h1v2zM8 8h2V5z"
              fill="#9fbdf2"
              stroke="#3f4c74"
              fillRule="evenodd"
            />
            <path d="M12.500 8.500l2.500-2h1.500v8h1v2.500h-5v-2.500h1.500v-6z" fill="#d5d8df" stroke="#4a4f60" />
          </Svg>
        </ToolButton>
        <button aria-label="Sidebar options" className="ml-auto p-0.5">
          <Caret />
        </button>
      </div>
      <div className="mt-2 h-px shrink-0 bg-linear-to-r from-[#4d5461] from-70% to-transparent" />
      <label htmlFor="content" className="mt-2.5 mb-[7px] pl-px leading-4">
        Document content :
      </label>
      <DropDown id="content" value="Headings" className="h-[26px]" />
      <div className="mt-1.5 min-h-0 flex-1 border-t border-l border-[#8d95a3] bg-white p-1 pt-0.5">
        <div className="flex items-center">
          <input
            id="heading-1"
            type="checkbox"
            className="mr-px h-3.5 w-3.5 shrink-0 appearance-none border border-[#7d7d7d] bg-white"
          />
          <label htmlFor="heading-1" className="flex-1 bg-[#99b4d1] pl-1 leading-[19px]">
            未命名 1
          </label>
        </div>
      </div>
      <div className="mt-1.5 flex gap-1.5">
        {navShapes.map(({ label, d }) => (
          <button
            key={label}
            aria-label={label}
            disabled
            className="flex h-[27px] w-[25px] items-center justify-center rounded-sm border border-[#767b85] bg-linear-to-b from-[#f7f7f7] from-50% to-[#d9d9d9] to-50%"
          >
            <Svg>
              <path d={d} fill="#e6e6e6" stroke="#adadad" />
            </Svg>
          </button>
        ))}
      </div>
      <div className="mt-[7px] mb-1 flex items-center justify-between pl-px">
        <label htmlFor="outline" className="whitespace-nowrap">
          Outline level :
        </label>
        <DropDown id="outline" value="只显示 1 至 9 级段落" className="h-[26px] w-36" />
      </div>
    </div>
  </aside>
);

/* ---------- status bar ---------- */

const statusFields = [
  { text: '第 1 行第 1 列', width: 'w-[127px]' },
  { text: '第 1 节', width: 'w-[94px]' },
  { text: '第 1 章', width: 'w-[86px]' },
  { text: '第 1 页 , 共 1 页', width: 'w-[147px]' },
  { text: '中文 ( 中华人民共和国 )', width: 'w-[136px]' },
  { text: '', width: 'w-[80px]' },
];

const field =
  'h-5 shrink-0 border-t border-l border-t-[#9aa1ae] border-l-[#9aa1ae] border-r border-b border-r-white border-b-white pl-1 leading-5 whitespace-nowrap';

const StatusBar = () => (
  <footer className="flex h-7 shrink-0 items-center border-b border-[#8f98ab] bg-linear-to-b from-[#f5f9ff] to-[#dfe9f8] pl-[5px]">
    <div className={clsx(field, 'mr-1.5 min-w-0 flex-1')}>文件命令</div>
    <div className="flex gap-[7px]">
      {statusFields.map((f, i) => (
        <div key={i} className={clsx(field, f.width)}>
          {f.text}
        </div>
      ))}
      <div className={clsx(field, 'w-[53px] pr-0.5 text-center')}>Ins</div>
    </div>
    <div className="flex pl-0.5">
      <ToolButton label="Normal view" active>
        <Svg>
          <rect x="1.500" y="1.500" width="15" height="15" fill="#fff" stroke="#49527a" />
          <path d="M4 4.500h10M4 6.500h10M4 8.500h10M4 10.500h10M4 12.500h10M4 14.500h10" stroke="#6d7597" />
        </Svg>
      </ToolButton>
      <ToolButton label="Continuous view">
        <Svg>
          <path d="M3 4.500h12M3 6.500h12M3 8.500h12M3 10.500h12M3 12.500h12M3 14.500h12" stroke="#7780a0" />
        </Svg>
      </ToolButton>
      <ToolButton label="Master page">
        <Svg>
          <rect x="1.500" y="1.500" width="15" height="15" fill="#fff" stroke="#49527a" />
          <path d="M4 4.500h10M4 13.500h10" stroke="#a5accb" />
        </Svg>
      </ToolButton>
      <ToolButton label="Outline view">
        <Svg>
          <path
            d="M3 4.500h1M5 4.500h7M4 6.500h1M6 6.500h8M6 8.500h1M8 8.500h5M6 10.500h1M8 10.500h7M4 12.500h1M6 12.500h7M6 14.500h1M8 14.500h8"
            stroke="#7780a0"
          />
        </Svg>
      </ToolButton>
    </div>
    <div className="flex items-center pl-2">
      <button aria-label="Zoom out">
        <Svg size={16}>
          <circle cx="9" cy="9" r="8" fill="#dcebf8" stroke="#7f96b2" />
          <path d="M5 9h8" stroke="#8a1538" strokeWidth="1.500" />
        </Svg>
      </button>
      <input
        type="range"
        aria-label="Zoom"
        defaultValue={50}
        className="mx-0.5 h-2 w-[109px] appearance-none bg-[linear-gradient(#4d5461,#4d5461)] bg-[length:100%_1px] bg-center bg-no-repeat [&::-webkit-slider-thumb]:h-2 [&::-webkit-slider-thumb]:w-2 [&::-webkit-slider-thumb]:appearance-none [&::-webkit-slider-thumb]:rounded-full [&::-webkit-slider-thumb]:border [&::-webkit-slider-thumb]:border-[#b98519] [&::-webkit-slider-thumb]:bg-[#fbc54a]"
      />
      <button aria-label="Zoom in more">
        <Svg size={16}>
          <circle cx="9" cy="9" r="8" fill="#dcebf8" stroke="#7f96b2" />
          <path d="M5 9h8M9 5v8" stroke="#8a1538" strokeWidth="1.500" />
        </Svg>
      </button>
    </div>
    <span className="w-[73px] pl-[17px]">100%</span>
  </footer>
);

const Watermark = () => (
  <div className="pointer-events-none absolute top-2.5 left-1 z-30 flex opacity-70">
    <svg width="58" height="56" viewBox="0 0 58 56" fill="none" className="shrink-0" aria-hidden="true">
      <path d="M3 36C-3 17 12 0 30 1c7 0 13 2 17 6L15 15 8 35z" fill="#1687d2" />
      <path d="M33 11c10-3 20 2 23 13 1 8-3 14-8 18l-9-2z" fill="#f28c22" />
      <path d="M3 38c6 3 12 2 18-2l1 9 28-3c-7 12-22 15-33 10C9 49 5 44 3 38z" fill="#f28c22" />
      <path d="M20 47l9-31h12c9 0 9 16-2 16h-9l-4 15z" fill="#2c96d8" stroke="#fff" strokeWidth="4" />
      <path d="M5 35c8-1 12-5 14-13" stroke="#fff" strokeWidth="4" />
    </svg>
    <div className="flex flex-col pl-1">
      <span className="pt-0.5 text-[27px] leading-8 font-bold text-[#2c96dc]">河东软件园</span>
      <span className="font-['Liberation_Serif',serif] text-xl leading-6 font-bold text-[#3fae2a]">www.pc0359.cn</span>
    </div>
  </div>
);

export default function App() {
  return (
    <div className="relative flex h-screen flex-col overflow-hidden bg-[#10121c] font-['Noto_Sans','Noto_Sans_CJK_SC',sans-serif] text-xs text-black">
      <div className="flex min-h-0 flex-1 flex-col rounded-t-lg border border-[#3b4256] border-r-[#4fc2ea] bg-[#b9d1ea]">
        <div className="flex min-h-0 flex-1 flex-col border-b-2 border-[#7cc9ea] px-[7px] pb-[5px]">
          <TitleBar />
          <div className="flex min-h-0 flex-1 flex-col">
            <MenuBar />
            <MainToolbar />
            <FormatToolbar />
            <div className="flex min-h-0 flex-1">
              <Workspace />
              <Sidebar />
            </div>
            <StatusBar />
          </div>
        </div>
      </div>
      <Watermark />
    </div>
  );
}
